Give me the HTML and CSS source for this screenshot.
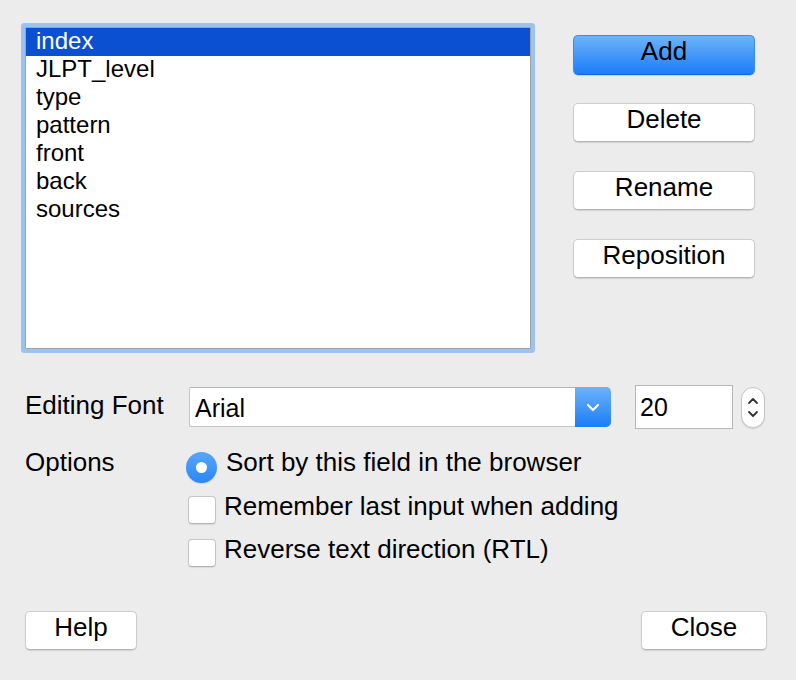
FILE: index.html
```html
<!DOCTYPE html>
<html>
<head>
<meta charset="utf-8">
<link rel="stylesheet" href="styles.css">
</head>
<body>
<div class="dialog">
  <div class="top">
    <div class="list">
      <div class="item selected">index</div>
      <div class="item">JLPT_level</div>
      <div class="item">type</div>
      <div class="item">pattern</div>
      <div class="item">front</div>
      <div class="item">back</div>
      <div class="item">sources</div>
    </div>
    <div class="side-buttons">
      <div class="btn primary">Add</div>
      <div class="btn side first">Delete</div>
      <div class="btn side">Rename</div>
      <div class="btn side">Reposition</div>
    </div>
  </div>

  <div class="font-row">
    <div class="label">Editing Font</div>
    <div class="combo">
      <div class="combo-text">Arial</div>
      <div class="combo-arrow">
        <svg width="14" height="9" viewBox="0 0 14 9"><path d="M2 2 L7 7 L12 2" fill="none" stroke="#fff" stroke-width="2.2" stroke-linecap="round" stroke-linejoin="round"/></svg>
      </div>
    </div>
    <div class="number">20</div>
    <div class="stepper">
      <svg width="12" height="8" viewBox="0 0 12 8"><path d="M2 6 L6 2 L10 6" fill="none" stroke="#333" stroke-width="1.8" stroke-linecap="round" stroke-linejoin="round"/></svg>
      <svg width="12" height="8" viewBox="0 0 12 8"><path d="M2 2 L6 6 L10 2" fill="none" stroke="#333" stroke-width="1.8" stroke-linecap="round" stroke-linejoin="round"/></svg>
    </div>
  </div>

  <div class="options">
    <div class="label opt-label">Options</div>
    <div class="opt-list">
      <div class="opt">
        <span class="radio"><span class="dot"></span></span>
        <span class="opt-text radio-text">Sort by this field in the browser</span>
      </div>
      <div class="opt">
        <span class="check"></span>
        <span class="opt-text">Remember last input when adding</span>
      </div>
      <div class="opt">
        <span class="check"></span>
        <span class="opt-text">Reverse text direction (RTL)</span>
      </div>
    </div>
  </div>

  <div class="footer">
    <div class="btn help">Help</div>
    <div class="btn close">Close</div>
  </div>
</div>
</body>
</html>
```

FILE: styles.css
```css
html, body {
  margin: 0;
  padding: 0;
  background: #ececec;
  width: 796px;
  height: 680px;
  overflow: hidden;
  font-family: "Liberation Sans", Arial, sans-serif;
  color: #000;
}

.dialog {
  padding: 27px 29px 0 25px;
}

.top {
  display: flex;
  align-items: flex-start;
}

.list {
  width: 504px;
  height: 320px;
  border: 1px solid #a2a2a2;
  background: #fff;
  box-shadow: 0 0 0 4px #9ac3f1;
  border-radius: 1px;
  font-size: 24px;
}

.item {
  height: 28px;
  line-height: 26px;
  padding-left: 10px;
}

.item.selected {
  background: #0b50d0;
  color: #fff;
}

.side-buttons {
  margin-left: 42px;
  padding-top: 8px;
  display: flex;
  flex-direction: column;
}

.btn {
  box-sizing: border-box;
  height: 39px;
  line-height: 30px;
  text-align: center;
  font-size: 26px;
  background: #fff;
  border: 1px solid #cdcdcd;
  border-bottom-color: #b5b5b5;
  border-radius: 5px;
  box-shadow: 0 1px 1px rgba(0,0,0,0.12);
}

.side-buttons .btn {
  width: 182px;
}

.btn.primary {
  height: 40px;
  background: linear-gradient(#6db3fa, #1b7df8);
  border: 1px solid #3a8cf0;
  border-bottom-color: #1766d6;
}

.btn.side {
  margin-top: 29px;
}

.btn.side.first {
  margin-top: 28px;
}

.font-row {
  display: flex;
  align-items: center;
  margin-top: 36px;
  height: 44px;
}

.label {
  font-size: 26px;
}

.font-row .label {
  width: 164px;
  margin-top: -4px;
}

.combo {
  width: 422px;
  height: 40px;
  box-sizing: border-box;
  display: flex;
  background: #fff;
  border: 1px solid #c4c4c4;
  border-top-color: #b4b4b4;
  border-right: none;
  border-radius: 2px 5px 5px 2px;
}

.combo-text {
  flex: 1;
  font-size: 25px;
  line-height: 40px;
  padding-left: 5px;
}

.combo-arrow {
  width: 36px;
  margin: -1px 0;
  background: linear-gradient(#6db3fa, #1b7df8);
  border-radius: 0 5px 5px 0;
  display: flex;
  align-items: center;
  justify-content: center;
}

.number {
  box-sizing: border-box;
  width: 98px;
  height: 44px;
  margin-left: 24px;
  background: #fff;
  border: 1px solid #b9b9b9;
  font-size: 25px;
  line-height: 42px;
  padding-left: 4px;
}

.stepper {
  box-sizing: border-box;
  width: 24px;
  height: 41px;
  margin-left: 8px;
  background: #fff;
  border: 1px solid #c6c6c6;
  border-radius: 12px;
  box-shadow: 0 1px 1px rgba(0,0,0,0.12);
  display: flex;
  flex-direction: column;
  align-items: center;
  justify-content: center;
  gap: 5px;
}

.stepper svg {
  display: block;
}

.options {
  display: flex;
  margin-top: 20px;
}

.opt-label {
  width: 161px;
  line-height: 26px;
}

.opt-list {
  display: flex;
  flex-direction: column;
  gap: 7px;
}

.opt {
  display: flex;
  align-items: center;
  height: 36px;
}

.radio {
  width: 31px;
  height: 31px;
  border-radius: 50%;
  background: linear-gradient(#58a6fa, #2a87f6);
  display: flex;
  align-items: center;
  justify-content: center;
  box-shadow: 0 1px 1px rgba(0,0,0,0.12);
}

.dot {
  width: 11px;
  height: 11px;
  border-radius: 50%;
  background: #fff;
}

.check {
  box-sizing: border-box;
  width: 28px;
  height: 28px;
  margin-left: 2px;
  background: #fff;
  border: 1px solid #c6c6c6;
  border-bottom-color: #b2b2b2;
  border-radius: 4px;
  box-shadow: 0 1px 1px rgba(0,0,0,0.08);
}

.opt-text {
  font-size: 26px;
  margin-left: 8px;
  margin-top: -7px;
}

.radio-text {
  margin-left: 9px;
  margin-top: -10px;
}

.footer {
  display: flex;
  justify-content: space-between;
  margin-top: 40px;
}

.btn.help {
  width: 112px;
}

.btn.close {
  width: 126px;
}
```
